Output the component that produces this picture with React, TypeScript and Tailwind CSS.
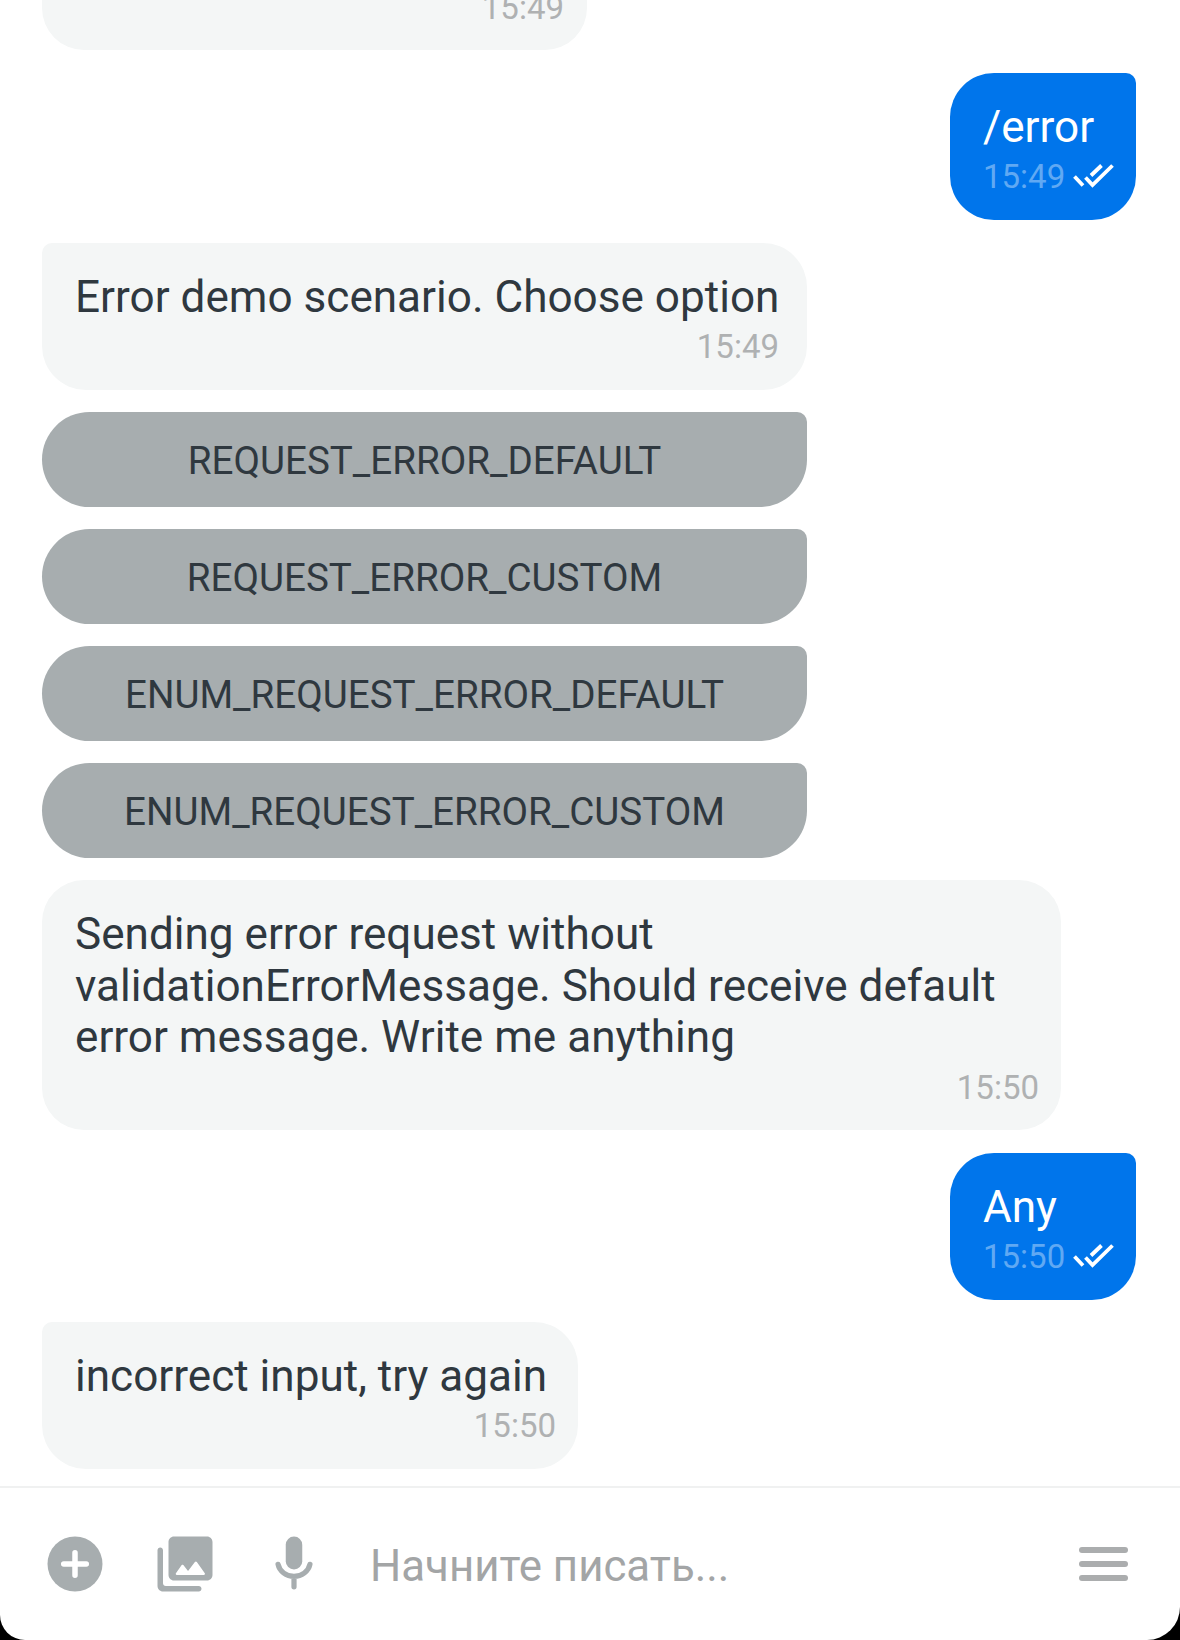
import React from "react";

function Time({ children }: { children: React.ReactNode }) {
  return <span className="text-[33px] leading-[38px] text-[#afb1b2]">{children}</span>;
}

function Incoming({ className, lines, time }: { className: string; lines: string[]; time: string }) {
  return (
    <div className={`flex flex-col self-start bg-[#f4f6f6] pl-[33px] pt-[29px] text-[#2f383f] ${className}`}>
      {lines.map((l) => (
        <p key={l} className="whitespace-nowrap text-[44.1px] leading-[51.5px]">{l}</p>
      ))}
      <div className="mt-[5px] flex justify-end leading-none">
        <Time>{time}</Time>
      </div>
    </div>
  );
}

function Outgoing({ className, text, time }: { className: string; text: string; time: string }) {
  return (
    <div className={`flex h-[147.5px] w-[186px] flex-col self-end rounded-[44px] rounded-tr-[10px] bg-[#0075eb] pl-[33px] pt-[29px] ${className}`}>
      <p className="whitespace-nowrap text-[44.1px] leading-[51.5px] text-white">{text}</p>
      <div className="mt-[5px] flex items-center">
        <span className="w-[81px] text-[33px] leading-[38px] text-[#60a9f3]">{time}</span>
        <svg className="ml-[9px] mt-[-2px]" width="41" height="26" viewBox="0 0 41 26" fill="none" stroke="#fff" strokeWidth="3.8">
          <path d="M1.500 13.500 10 22.500M12.500 14.500 19.500 22 39.500 2.500M18 12.500 28.500 2.500" />
        </svg>
      </div>
    </div>
  );
}

const options = [
  "REQUEST_ERROR_DEFAULT",
  "REQUEST_ERROR_CUSTOM",
  "ENUM_REQUEST_ERROR_DEFAULT",
  "ENUM_REQUEST_ERROR_CUSTOM",
];

function Composer() {
  return (
    <footer className="flex h-[154px] items-start border-t-2 border-[#f0f1f1] pl-[41.5px] pt-[42.5px]">
      <button className="block">
        <svg width="66" height="66" viewBox="0 0 24 24">
          <circle cx="12" cy="12" r="10" fill="#a7adaf" />
          <path d="M12 7.900v8.200M7.900 12h8.200" stroke="#fff" strokeWidth="2" strokeLinecap="round" />
        </svg>
      </button>
      <button className="ml-[44px] block">
        <svg width="66" height="66" viewBox="0 0 24 24" fill="#a7adaf">
          <path d="M22 16V4c0-1.100-.9-2-2-2H8c-1.100 0-2 .9-2 2v12c0 1.100.9 2 2 2h12c1.100 0 2-.9 2-2zM11.400 12.400l1.700 2.100 2.500-3.200c.2-.25.500-.25.700 0l2.900 4.100c.15.250 0 .6-.3.600H9c-.3 0-.5-.35-.3-.6l2.100-3c.15-.2.450-.2.600 0zM2 7v13c0 1.100.9 2 2 2h13c.55 0 1-.45 1-1s-.45-1-1-1H5c-.55 0-1-.45-1-1V7c0-.55-.45-1-1-1s-1 .45-1 1z" />
        </svg>
      </button>
      <button className="ml-[43px] block">
        <svg width="66" height="66" viewBox="0 0 24 24" fill="none" stroke="#a7adaf" strokeWidth="1.900" strokeLinecap="round">
          <rect x="9" y="2" width="6" height="12" rx="3" fill="#a7adaf" stroke="none" />
          <path d="M6.200 12.100a5.900 5.400 0 0 0 11.600 0M12 17.300v3" />
        </svg>
      </button>
      <span className="ml-[43.5px] mt-[10px] whitespace-nowrap text-[43.8px] leading-[51px] text-[#a3a5a6]">Начните писать...</span>
      <button className="ml-auto mr-[52px] mt-[16px] flex flex-col gap-[8px]">
        <span className="h-[6px] w-[49px] rounded-[3px] bg-[#abadae]" />
        <span className="h-[6px] w-[49px] rounded-[3px] bg-[#abadae]" />
        <span className="h-[6px] w-[49px] rounded-[3px] bg-[#abadae]" />
      </button>
    </footer>
  );
}

export default function App() {
  return (
    <div className="h-[1640px] w-[1180px] overflow-hidden bg-black font-['Roboto',sans-serif]">
      <div className="flex h-[1640px] flex-col overflow-hidden rounded-bl-[25px] rounded-br-[33px] bg-white">
        <main className="flex h-[1486px] shrink-0 flex-col pl-[42px] pr-[44px]">
          <div className="flex h-[50px] w-[545px] items-end justify-end self-start rounded-b-[42px] bg-[#f4f6f6] pb-[23px] pr-[23px]">
            <Time>15:49</Time>
          </div>
          <Outgoing className="mt-[22.5px]" text="/error" time="15:49" />
          <Incoming
            className="mt-[22.5px] h-[147px] w-[765px] rounded-[44px] rounded-tl-[10px] pr-[28px]"
            lines={["Error demo scenario. Choose option"]}
            time="15:49"
          />
          <div className="mt-[22px] flex w-[765px] flex-col gap-[22px]">
            {options.map((o) => (
              <button
                key={o}
                className="flex h-[95px] items-center justify-center rounded-[48px] rounded-tr-[10px] bg-[#a7adaf] pt-[4px] text-[38.6px] leading-[46px] text-[#2f383f]"
              >
                {o}
              </button>
            ))}
          </div>
          <Incoming
            className="mt-[22.5px] h-[249.5px] w-[1019px] rounded-[42px] pr-[22px]"
            lines={["Sending error request without", "validationErrorMessage. Should receive default", "error message. Write me anything"]}
            time="15:50"
          />
          <Outgoing className="mt-[23px]" text="Any" time="15:50" />
          <Incoming
            className="mt-[21.5px] h-[147.5px] w-[536px] rounded-[44px] rounded-tl-[10px] pr-[22px]"
            lines={["incorrect input, try again"]}
            time="15:50"
          />
        </main>
        <Composer />
      </div>
    </div>
  );
}
